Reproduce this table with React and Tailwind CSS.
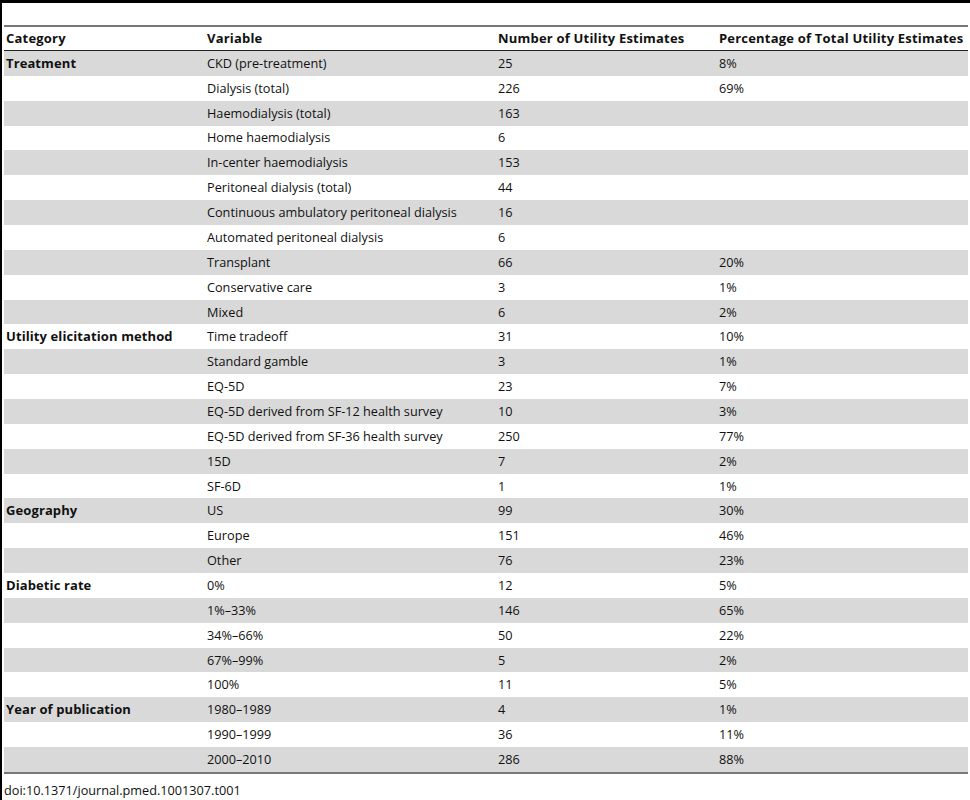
const rows = [
  ['Treatment', 'CKD (pre-treatment)', '25', '8%'],
  ['', 'Dialysis (total)', '226', '69%'],
  ['', 'Haemodialysis (total)', '163', ''],
  ['', 'Home haemodialysis', '6', ''],
  ['', 'In-center haemodialysis', '153', ''],
  ['', 'Peritoneal dialysis (total)', '44', ''],
  ['', 'Continuous ambulatory peritoneal dialysis', '16', ''],
  ['', 'Automated peritoneal dialysis', '6', ''],
  ['', 'Transplant', '66', '20%'],
  ['', 'Conservative care', '3', '1%'],
  ['', 'Mixed', '6', '2%'],
  ['Utility elicitation method', 'Time tradeoff', '31', '10%'],
  ['', 'Standard gamble', '3', '1%'],
  ['', 'EQ-5D', '23', '7%'],
  ['', 'EQ-5D derived from SF-12 health survey', '10', '3%'],
  ['', 'EQ-5D derived from SF-36 health survey', '250', '77%'],
  ['', '15D', '7', '2%'],
  ['', 'SF-6D', '1', '1%'],
  ['Geography', 'US', '99', '30%'],
  ['', 'Europe', '151', '46%'],
  ['', 'Other', '76', '23%'],
  ['Diabetic rate', '0%', '12', '5%'],
  ['', '1%–33%', '146', '65%'],
  ['', '34%–66%', '50', '22%'],
  ['', '67%–99%', '5', '2%'],
  ['', '100%', '11', '5%'],
  ['Year of publication', '1980–1989', '4', '1%'],
  ['', '1990–1999', '36', '11%'],
  ['', '2000–2010', '286', '88%'],
];

const cols = 'grid grid-cols-[201px_291px_221px_1fr]';

export default function App() {
  return (
    <div className="w-[970px] h-[800px] bg-white text-[12.7px] text-[#111] border-l-[2px] border-black" style={{ fontFamily: '"Open Sans", "Liberation Sans", sans-serif' }}>
      <div className="h-[3px] bg-black -ml-[2px]" />
      <div className="pl-[2px] pr-[2px]">
        <div className="h-[22px]" />
        <div className="border-t-[2px] border-[#777]" />
        <div className={`${cols} h-[24px] items-center font-bold text-[13px] tracking-[0.2px] border-b-[1px] border-[#222]`}>
          <div className="pl-[2px]">Category</div>
          <div className="pl-[2px]">Variable</div>
          <div className="pl-[2px]">Number of Utility Estimates</div>
          <div className="pl-[2px]">Percentage of Total Utility Estimates</div>
        </div>
        <div className="border-b-[2px] border-[#777]">
          {rows.map((r, i) => (
            <div key={i} className={`${cols} h-[24.86px] items-center ${i % 2 === 0 ? 'bg-[#d9d9d9]' : 'bg-white'}`}>
              <div className="pl-[2px] font-bold text-[13px] tracking-[0.1px]">{r[0]}</div>
              <div className="pl-[2px]">{r[1]}</div>
              <div className="pl-[2px]">{r[2]}</div>
              <div className="pl-[2px]">{r[3]}</div>
            </div>
          ))}
        </div>
        <div className="pt-[7px] leading-[18px]">doi:10.1371/journal.pmed.1001307.t001</div>
      </div>
    </div>
  );
}
